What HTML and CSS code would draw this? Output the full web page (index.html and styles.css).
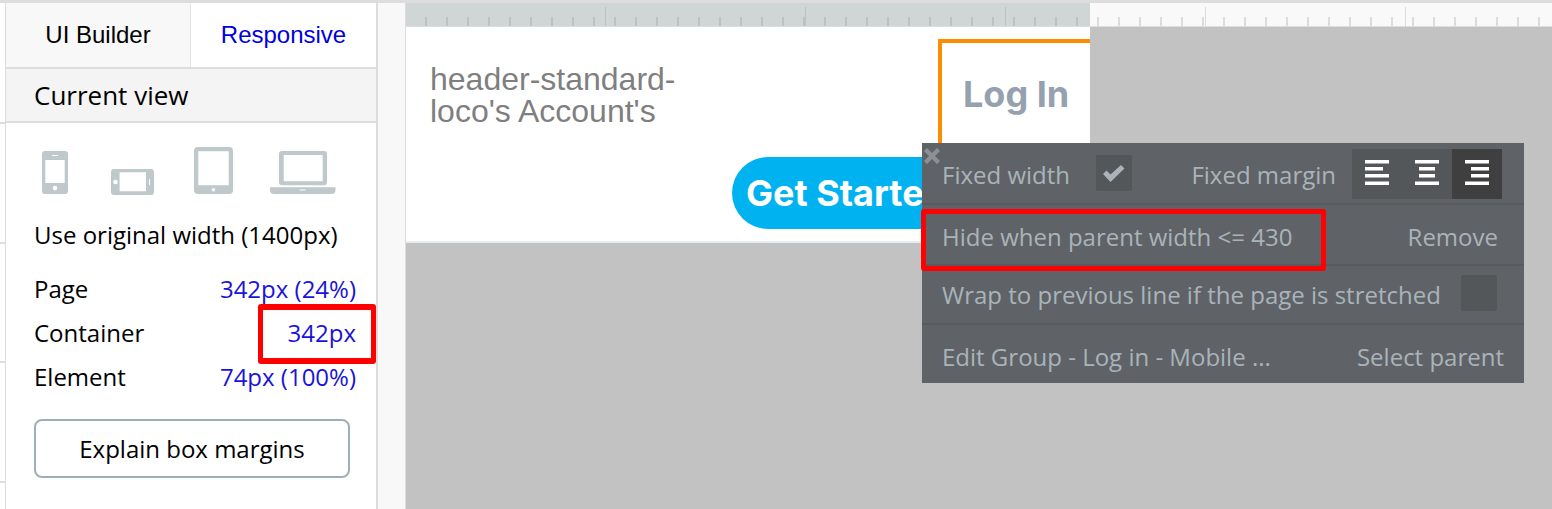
FILE: index.html
```html
<!DOCTYPE html>
<html lang="en">
<head>
  <meta charset="UTF-8">
  <title>Responsive editor</title>
  <link rel="stylesheet" href="styles.css">
</head>
<body>
  <div class="app">
    <div class="edge-strip"></div>

    <aside class="sidebar">
      <div class="tabs">
        <div class="tab">UI Builder</div>
        <div class="tab tab-active">Responsive</div>
      </div>
      <div class="panel-title">Current view</div>
      <div class="panel-body">
        <div class="devices">
          <svg class="device device-phone" width="26" height="43" viewBox="0 0 26 43">
            <path fill-rule="evenodd" d="M3 0h20a3 3 0 0 1 3 3v37a3 3 0 0 1-3 3H3a3 3 0 0 1-3-3V3a3 3 0 0 1 3-3zM3.300 9v23h19.400V9zM10 4v1h6V4zM13 34.800a2.300 2.300 0 1 0 0 4.600a2.300 2.300 0 1 0 0-4.600z"/>
          </svg>
          <svg class="device device-landscape" width="44" height="26" viewBox="0 0 44 26">
            <path fill-rule="evenodd" d="M3 0h37a3 3 0 0 1 3 3v20a3 3 0 0 1-3 3H3a3 3 0 0 1-3-3V3a3 3 0 0 1 3-3zM8.600 3.300v19h26.400v-19zM38 10v6h1v-6zM4.500 10.700a2.300 2.300 0 1 0 0 4.600a2.300 2.300 0 1 0 0-4.600z"/>
          </svg>
          <svg class="device device-tablet" width="39" height="47" viewBox="0 0 39 47">
            <path fill-rule="evenodd" d="M4 0h31a4 4 0 0 1 4 4v39a4 4 0 0 1-4 4H4a4 4 0 0 1-4-4V4a4 4 0 0 1 4-4zM4.300 4.300v34h30.400v-34zM19.500 41a1.800 1.800 0 1 0 0 3.600a1.800 1.800 0 1 0 0-3.600z"/>
          </svg>
          <svg class="device device-laptop" width="66" height="43" viewBox="0 0 66 43">
            <path fill-rule="evenodd" d="M12 0h42a3 3 0 0 1 3 3v28.300a3 3 0 0 1-3 3H12a3 3 0 0 1-3-3V3a3 3 0 0 1 3-3zM13.700 4v26.300h39V4z"/>
            <path fill-rule="evenodd" d="M0 36.300h65.500v2.700a4 4 0 0 1-4 4H4a4 4 0 0 1-4-4zM29.500 38.500v1h6v-1z"/>
          </svg>
        </div>
        <div class="original-width">Use original width (1400px)</div>
        <div class="size-rows">
          <div class="size-row"><span>Page</span><span class="size-value">342px (24%)</span></div>
          <div class="size-row"><span>Container</span><span class="size-value">342px</span></div>
          <div class="size-row"><span>Element</span><span class="size-value">74px (100%)</span></div>
        </div>
        <button class="explain-btn">Explain box margins</button>
      </div>
    </aside>

    <div class="gutter"></div>

    <main class="canvas">
      <div class="ruler">
        <div class="ruler-page"></div>
      </div>
      <div class="page-frame">
        <div class="page-title">header-standard-<br>loco's Account's</div>
        <div class="get-started">Get Started</div>
        <div class="login-group">Log In</div>
      </div>
    </main>
  </div>

  <div class="highlight highlight-container"></div>

  <div class="popup">
    <svg class="popup-close" width="16" height="16" viewBox="0 0 16 16"><path d="M3 0l5 5l5-5l3 3l-5 5l5 5l-3 3l-5-5l-5 5l-3-3l5-5l-5-5z"/></svg>
    <div class="popup-row popup-row-first">
      <div class="popup-group">
        <span class="popup-label popup-label-width">Fixed width</span>
        <span class="checkbox">
          <svg width="24" height="20" viewBox="0 0 24 20"><path d="M1 11l3.500-3.500l4 4L19 2l3.500 3.500L8.500 19z"/></svg>
        </span>
      </div>
      <div class="popup-group">
        <span class="popup-label popup-label-margin">Fixed margin</span>
        <div class="align-buttons">
          <span class="align-btn">
            <svg width="26" height="26" viewBox="0 0 26 26"><path d="M1 0h24v3.500H1zM1 7h18v3.500H1zM1 14h24v3.500H1zM1 21.500h24V25H1z"/></svg>
          </span>
          <span class="align-btn">
            <svg width="26" height="26" viewBox="0 0 26 26"><path d="M1 0h24v3.500H1zM5 7h16v3.500H5zM5 14h16v3.500H5zM1 21.500h24V25H1z"/></svg>
          </span>
          <span class="align-btn align-btn-active">
            <svg width="26" height="26" viewBox="0 0 26 26"><path d="M1 0h24v3.500H1zM7 7h18v3.500H7zM7 14h18v3.500H7zM1 21.500h24V25H1z"/></svg>
          </span>
        </div>
      </div>
    </div>
    <div class="popup-row popup-row-hide">
      <span>Hide when parent width &lt;= 430</span>
      <span class="popup-remove">Remove</span>
    </div>
    <div class="popup-row popup-row-wrap">
      <span>Wrap to previous line if the page is stretched</span>
      <span class="checkbox checkbox-wrap"></span>
    </div>
    <div class="popup-row popup-row-last">
      <span>Edit Group - Log in - Mobile ...</span>
      <span>Select parent</span>
    </div>
  </div>

  <div class="highlight highlight-hide"></div>
</body>
</html>
```

FILE: styles.css
```css
* { box-sizing: border-box; }
html, body { margin: 0; height: 509px; overflow: hidden; }
body { position: relative; background: #fff; font-family: "Open Sans", sans-serif; font-size: 24px; color: #000; }

.app { display: flex; height: 509px; }

/* strip left of the sidebar, leftover rows of the panel behind */
.edge-strip {
  width: 5px;
  border-top: 3px solid #ddd;
  background:
    linear-gradient(#ddd, #ddd) 0 119px / 100% 2px no-repeat,
    linear-gradient(#ddd, #ddd) 0 239px / 100% 2px no-repeat,
    linear-gradient(#ddd, #ddd) 0 358px / 100% 2px no-repeat,
    linear-gradient(#ddd, #ddd) 0 478px / 100% 2px no-repeat,
    #fff;
}

.sidebar { width: 373px; border-left: 1px solid #ddd; border-right: 2px solid #ddd; border-top: 3px solid #ddd; background: #fff; }
.tabs { display: flex; height: 66px; border-bottom: 2px solid #ddd; font-family: "Liberation Sans", Arial, sans-serif; }
.tab { width: 185px; display: flex; align-items: center; justify-content: center; background: #f8f8f8; border-right: 1px solid #e4e4e4; }
.tab-active { flex: 1; background: #fff; color: #0000e0; border-right: none; }
.panel-title { height: 54px; padding: 8px 0 0 28px; background: #f4f4f4; border-bottom: 2px solid #ddd; font-size: 26px; line-height: 36px; }
.panel-body { padding: 0 20px 0 28px; }

.devices { height: 98px; position: relative; }
.device { position: absolute; fill: #bfc8ca; }
.device-phone { left: 8px; top: 28px; }
.device-landscape { left: 77px; top: 46px; }
.device-tablet { left: 160px; top: 24px; }
.device-laptop { left: 236px; top: 28px; }

.original-width { line-height: 28px; }
.size-rows { margin-top: 26px; }
.size-row { display: flex; justify-content: space-between; height: 44px; line-height: 28px; }
.size-value { color: #1a14d8; }
.explain-btn { display: block; width: 316px; height: 59px; margin-top: 12px; background: #fff; border: 2px solid #9fb0b5; border-radius: 8px; font-family: "Open Sans", sans-serif; font-size: 24px; color: #000; padding: 0; }

.gutter { width: 27px; border-top: 3px solid #ddd; background: #f8f8f8; }

.canvas { flex: 1; position: relative; overflow: hidden; background: #c2c2c2; border-left: 1px solid #ddd; }
.ruler {
  height: 27px;
  border-top: 3px solid #ddd;
  border-bottom: 1px solid #ddd;
  background:
    repeating-linear-gradient(90deg, transparent 0 199px, #dcdcdc 199px 200px) 0 4px / 100% 100% no-repeat,
    repeating-linear-gradient(90deg, transparent 0 19px, #dcdcdc 19px 21px) 0 14px / 100% 100% no-repeat,
    #f9f9f9;
}
.ruler-page {
  width: 684px;
  height: 100%;
  background:
    repeating-linear-gradient(90deg, transparent 0 199px, #bcc2c2 199px 200px) 0 4px / 100% 100% no-repeat,
    repeating-linear-gradient(90deg, transparent 0 19px, #bcc2c2 19px 21px) 0 14px / 100% 100% no-repeat,
    #d0d5d5;
}

/* the page being edited: free canvas, items sit where the user dropped them */
.page-frame { position: relative; width: 684px; height: 216px; overflow: hidden; background: #fff; border-bottom: 2px solid #e6ebef; }
.page-title { position: absolute; left: 24px; top: 36px; font-family: "Liberation Sans", Arial, sans-serif; font-size: 32px; line-height: 32px; color: #7f7f7f; }
.get-started { position: absolute; left: 326px; top: 130px; width: 300px; height: 72px; padding-left: 14px; border-radius: 36px; background: #00b2f0; color: #fff; font-family: Inter, sans-serif; font-weight: 700; font-size: 36px; line-height: 72px; white-space: nowrap; }
.login-group { position: absolute; left: 532px; top: 12px; width: 260px; height: 190px; border: 4px solid #ff8c00; padding: 26px 0 0 21px; font-family: Inter, sans-serif; font-weight: 700; font-size: 36px; line-height: 50px; color: #95a1ae; }

.highlight { position: absolute; border: 5px solid #f00; border-radius: 3px; }
.highlight-container { left: 258px; top: 304px; width: 118px; height: 60px; border-width: 6px 5px; }
.highlight-hide { left: 921px; top: 209px; width: 405px; height: 62px; }

.popup { position: absolute; left: 922px; top: 143px; width: 602px; height: 240px; background: #5f6367; color: #a9b4ba; }
.popup-close { position: absolute; left: 2px; top: 5px; fill: #8b9196; }
.popup-row { display: flex; align-items: center; justify-content: space-between; padding: 0 20px; border-bottom: 2px solid #575b5e; white-space: nowrap; }
.popup-row-first { height: 62px; }
.popup-row-hide { height: 61px; padding-top: 4px; }
.popup-row-wrap { height: 59px; }
.popup-row-last { height: 58px; padding-top: 5px; border-bottom: none; }
.popup-group { display: flex; align-items: center; }
.popup-label { padding-top: 2px; }
.popup-label-width { margin-right: 26px; }
.popup-label-margin { margin-right: 16px; }
.popup-remove { margin-right: 6px; }
.checkbox { display: flex; align-items: center; justify-content: center; width: 36px; height: 36px; border-radius: 2px; background: #53575a; }
.checkbox svg { fill: #a9b4ba; }
.checkbox-wrap { margin-right: 7px; margin-bottom: 3px; }
.align-buttons { display: flex; margin-top: 2px; margin-right: 2px; }
.align-btn { display: flex; align-items: center; justify-content: center; width: 50px; height: 50px; background: #53575a; }
.align-btn svg { fill: #fff; margin-bottom: 2px; }
.align-btn-active { background: #3f3f3f; }
```
